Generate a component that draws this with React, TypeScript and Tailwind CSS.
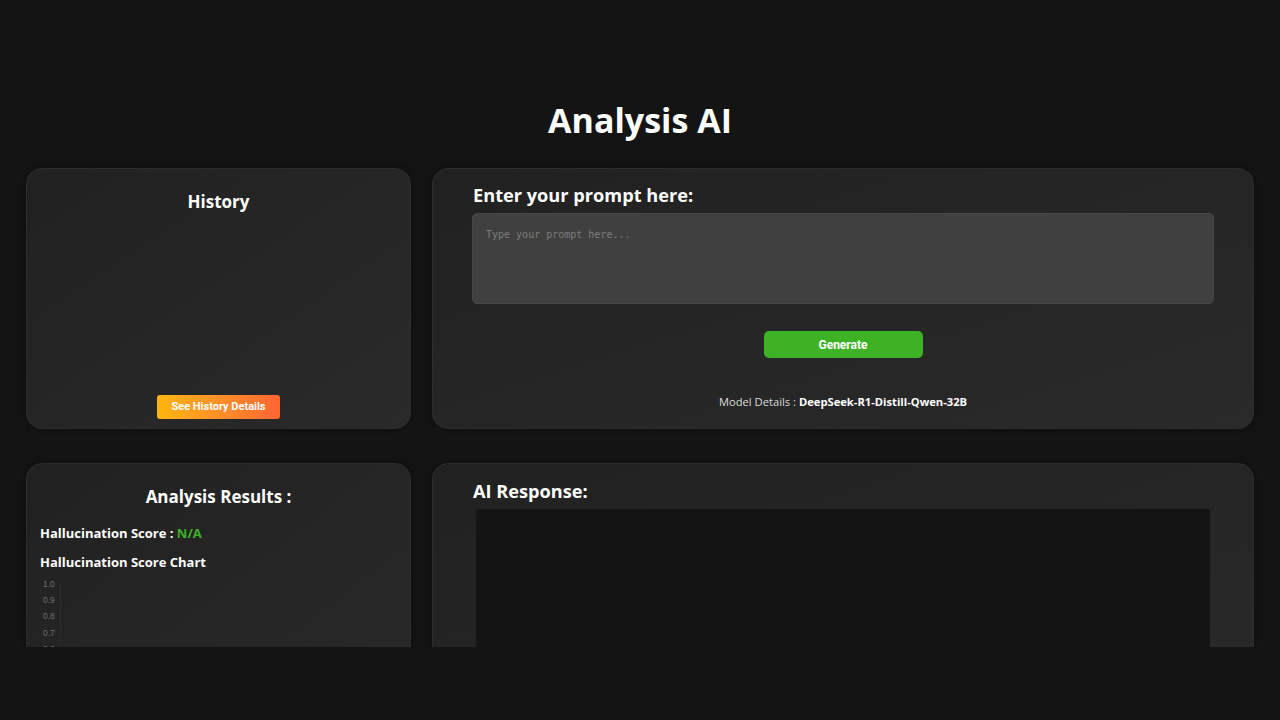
import React from "react";

// Card shell shared by the four panels.
function Card({ className = "", children }: { className?: string; children: React.ReactNode }) {
  return (
    <div
      className={
        "rounded-2xl border border-[#2d2d2d] bg-gradient-to-br from-[#212121] to-[#2a2a2a] shadow-[0_0_6px_rgba(0,0,0,0.4)] " +
        className
      }
    >
      {children}
    </div>
  );
}

function HistoryCard() {
  return (
    <Card className="flex h-[261px] flex-col items-center pt-[20px] pb-[9px]">
      <h2 className="text-[17px] font-bold text-white">History</h2>
      <div className="flex-1" />
      <button
        type="button"
        className="h-6 w-[123px] rounded-[3px] bg-gradient-to-r from-[#ffb60e] to-[#ff6431] text-[11px] font-bold text-white font-['Roboto',sans-serif]"
      >
        See History Details
      </button>
    </Card>
  );
}

function PromptCard() {
  return (
    <Card className="flex h-[261px] flex-col px-[39px] pt-[14px]">
      <h2 className="pl-[1px] text-[18.2px] font-bold leading-[24px] text-white">Enter your prompt here:</h2>
      <textarea
        placeholder="Type your prompt here..."
        className="mt-[6px] h-[91px] w-full resize-none rounded-[5px] border border-[#474747] bg-[#404040] px-[13px] py-[13px] font-['DejaVu_Sans_Mono',monospace] text-[10px] text-white outline-none placeholder:text-[#7c7c7c]"
      />
      <div className="mt-[27px] flex justify-center">
        <button
          type="button"
          className="h-[27px] w-[159px] rounded-[5px] bg-[#3cb224] text-[12px] font-bold text-white font-['Roboto',sans-serif]"
        >
          Generate
        </button>
      </div>
      <p className="mt-[36px] text-center text-[11.2px] text-[#dcdcdc]">
        Model Details : <span className="font-bold text-white">DeepSeek-R1-Distill-Qwen-32B</span>
      </p>
    </Card>
  );
}

function AnalysisCard() {
  const ticks = ["1.0", "0.9", "0.8", "0.7", "0.6"];
  return (
    <Card className="h-[300px] px-[13px] pt-[20px]">
      <h2 className="text-center text-[17px] font-bold text-white">Analysis Results :</h2>
      <p className="mt-[14px] text-[13px] font-bold text-white">
        Hallucination Score : <span className="text-[#3cb224]">N/A</span>
      </p>
      <p className="mt-[10px] text-[13px] font-bold text-white">Hallucination Score Chart</p>
      <div className="mt-[3px] flex">
        <div className="flex w-[20px] flex-col font-['Liberation_Sans',sans-serif] text-[8.5px] leading-[16.4px] text-[#6f6f6f]">
          {ticks.map((t) => (
            <span key={t} className="pl-[3px]">{t}</span>
          ))}
        </div>
        <div className="mt-[8px] w-px bg-[#2c2c2c]" />
      </div>
    </Card>
  );
}

function ResponseCard() {
  return (
    <Card className="flex h-[300px] flex-col px-10 pt-[15px]">
      <h2 className="text-[18.2px] font-bold leading-[24px] text-white">AI Response:</h2>
      <div className="mx-[3px] mt-[6px] flex-1 rounded-[3px] bg-[#141414]" />
    </Card>
  );
}

export default function App() {
  return (
    <div className="h-[720px] w-full bg-[#141414] font-['Open_Sans',sans-serif]">
      <div className="h-[647px] overflow-hidden">
        <h1 className="pt-[96px] text-center text-[34px] font-bold leading-[48px] text-white">Analysis AI</h1>
        <div className="mt-[24px] grid grid-cols-[385px_1fr] gap-x-[21px] gap-y-[34px] px-[26px]">
          <HistoryCard />
          <PromptCard />
          <AnalysisCard />
          <ResponseCard />
        </div>
      </div>
    </div>
  );
}
